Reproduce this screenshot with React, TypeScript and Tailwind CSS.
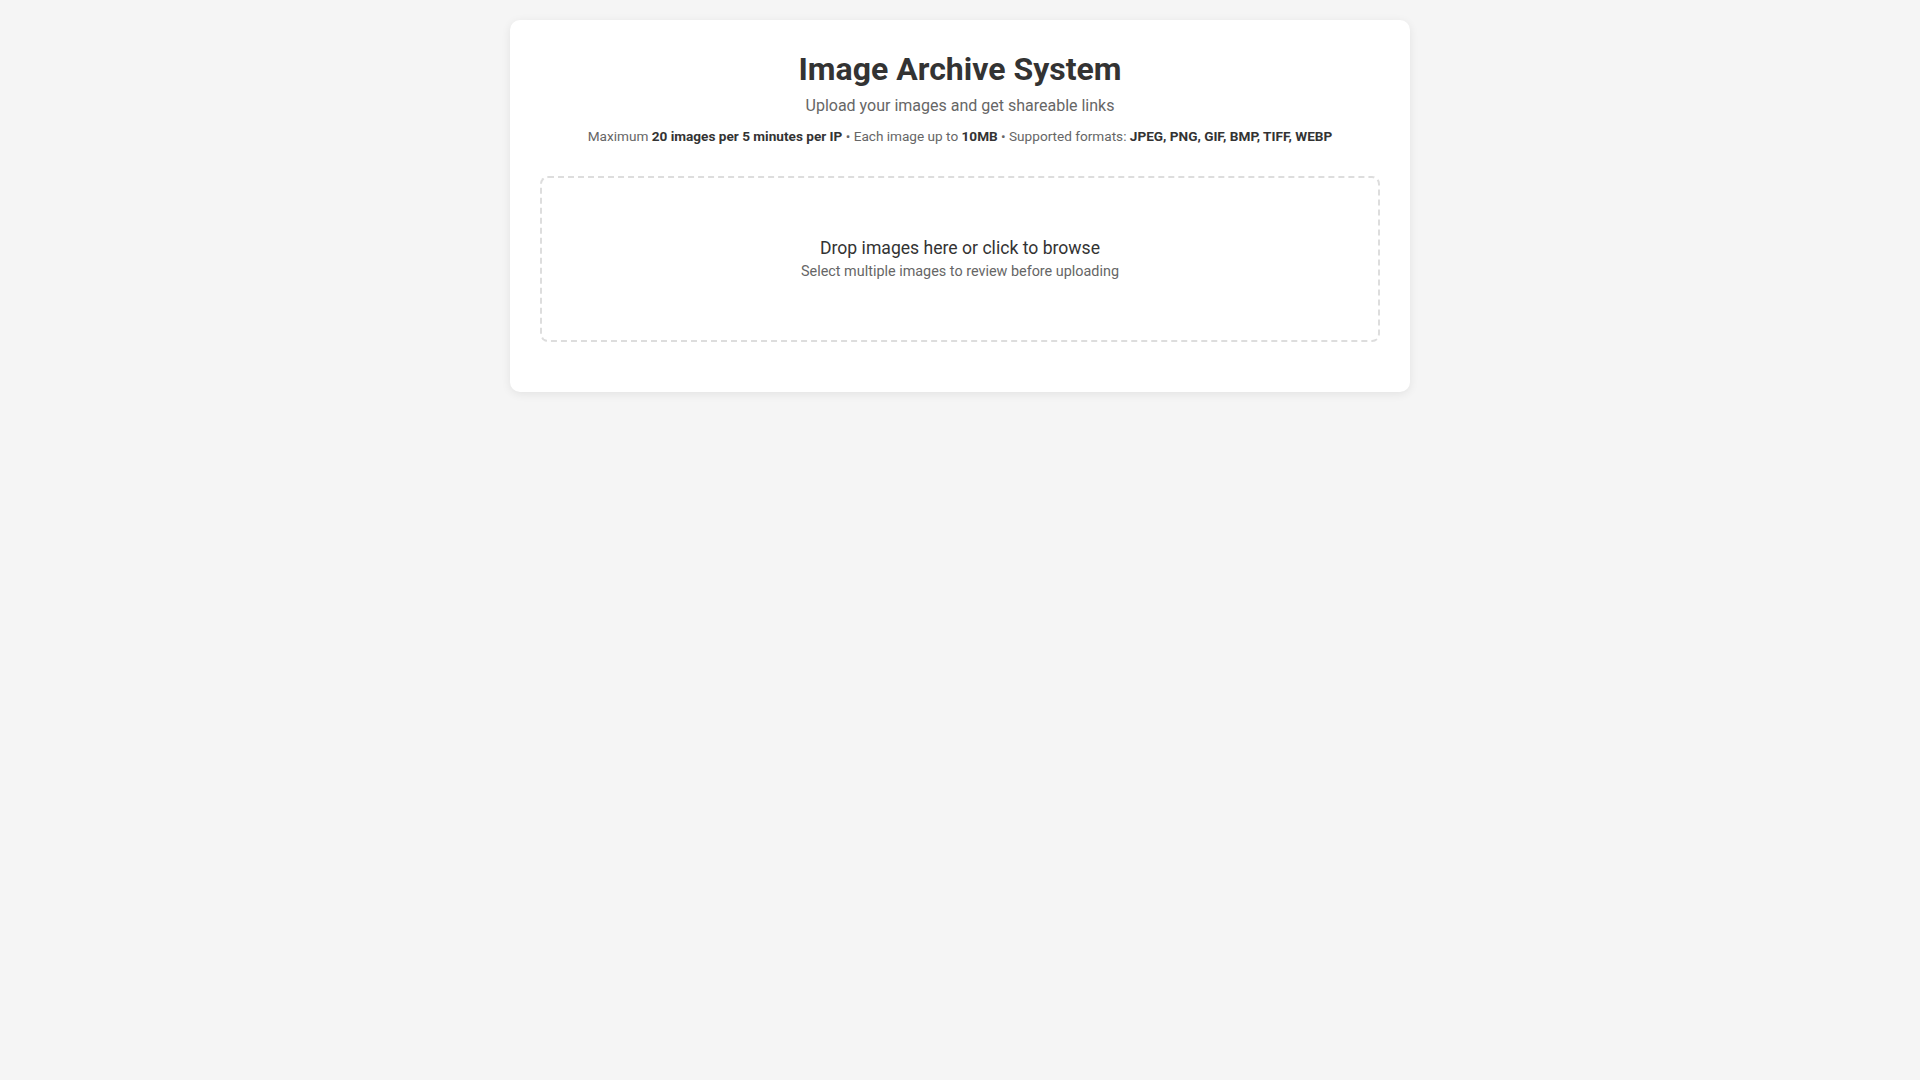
export default function App() {
  return (
    <div
      className="min-h-screen bg-[#f5f5f5] px-5 pt-5 pb-5 text-[#333]"
      style={{ fontFamily: 'Roboto, "Liberation Sans", Arial, sans-serif' }}
    >
      <div className="mx-auto w-[900px] rounded-[10px] bg-white p-[30px] shadow-[0_2px_10px_rgba(0,0,0,0.08)]">
        {/* Header */}
        <div className="text-center">
          <h1 className="text-[32px] font-bold leading-[38px] text-[#333]">Image Archive System</h1>
          <p className="mt-[8px] text-[16px] leading-[20px] text-[#666]">
            Upload your images and get shareable links
          </p>
          <p className="mt-[10px] text-[13.6px] leading-[20px] text-[#666]">
            Maximum <strong className="font-bold text-[#333]">20 images per 5 minutes per IP</strong> • Each image
            up to <strong className="font-bold text-[#333]">10MB</strong> • Supported formats:{' '}
            <strong className="font-bold text-[#333]">JPEG, PNG, GIF, BMP, TIFF, WEBP</strong>
          </p>
        </div>

        {/* Drop zone */}
        <div className="mt-[30px] mb-[20px] cursor-pointer rounded-[8px] border-2 border-dashed border-[#ddd] px-5 pt-[59px] pb-[58px] text-center">
          <p className="text-[17.6px] leading-[22px] text-[#333]">Drop images here or click to browse</p>
          <p className="mt-[3px] text-[14.4px] leading-[20px] text-[#666]">
            Select multiple images to review before uploading
          </p>
        </div>
      </div>
    </div>
  );
}
